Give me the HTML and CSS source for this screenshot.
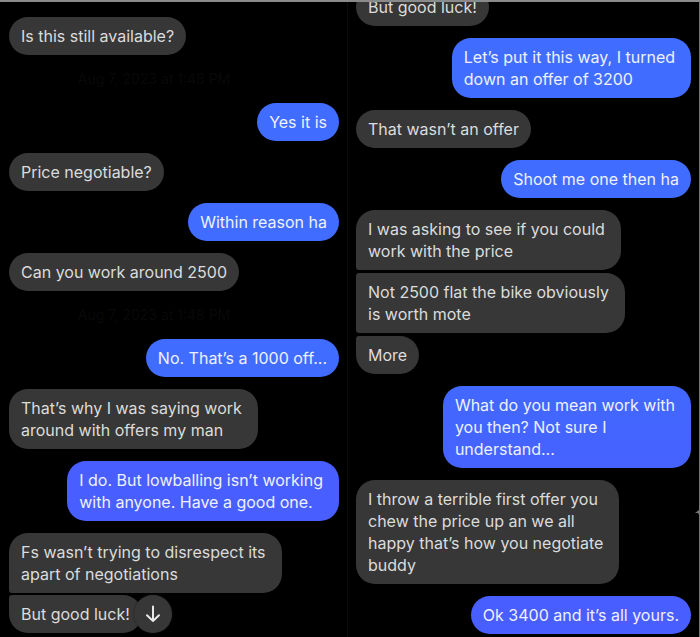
FILE: index.html
```
<!DOCTYPE html>
<html lang="en">
<head>
    <meta charset="UTF-8">
    <meta name="viewport" content="width=device-width, initial-scale=1.0">
    <title>Messages</title>
    <link rel="stylesheet" href="styles.css">
</head>
<body>
    <main class="chats">
        <section class="chat">
            <p class="msg">Is this still available?</p>
            <p class="time">Aug 7, 2023 at 1:48 PM</p>
            <p class="msg sent">Yes it is</p>
            <p class="msg">Price negotiable?</p>
            <p class="msg sent">Within reason ha</p>
            <p class="msg">Can you work around 2500</p>
            <p class="time">Aug 7, 2023 at 1:48 PM</p>
            <p class="msg sent">No. That’s a 1000 off...</p>
            <p class="msg multi">That’s why I was saying work<br>around with offers my man</p>
            <p class="msg sent multi low">I do. But lowballing isn’t working<br>with anyone. Have a good one.</p>
            <div class="group tight">
                <p class="msg multi">Fs wasn’t trying to disrespect its<br>apart of negotiations</p>
                <div class="last-row">
                    <p class="msg">But good luck!</p>
                    <button class="scroll-btn" type="button" aria-label="Scroll to bottom">
                        <svg width="20" height="20" viewBox="0 0 20 20"><path d="M10 2.5V17M4 11.2L10 17L16 11.2"/></svg>
                    </button>
                </div>
            </div>
        </section>
        <section class="chat chat-next">
            <p class="msg">But good luck!</p>
            <p class="msg sent multi">Let’s put it this way, I turned<br>down an offer of 3200</p>
            <p class="msg">That wasn’t an offer</p>
            <p class="msg sent">Shoot me one then ha</p>
            <div class="group">
                <p class="msg multi">I was asking to see if you could<br>work with the price</p>
                <p class="msg multi">Not 2500 flat the bike obviously<br>is worth mote</p>
                <p class="msg">More</p>
            </div>
            <p class="msg sent multi mid">What do you mean work with<br>you then? Not sure I<br>understand...</p>
            <p class="msg multi">I throw a terrible first offer you<br>chew the price up an we all<br>happy that’s how you negotiate<br>buddy</p>
            <p class="msg sent low">Ok 3400 and it’s all yours.</p>
        </section>
        <svg class="edge-mark" width="4" height="5" viewBox="0 0 4 5"><path d="M0 3L4 0V5L3 3Z"/></svg>
    </main>
</body>
</html>
```

FILE: styles.css
```
* { margin: 0; padding: 0; box-sizing: border-box; }
body { font-family: Inter, "Liberation Sans", sans-serif; font-size: 16px; line-height: 22px; background: #000; color: #dcdcdc; min-height: 100vh; }
.chats { position: relative; display: grid; grid-template-columns: 348fr 351fr; height: 100vh; overflow: hidden; border-top: 2px solid #8a8a8a; border-right: 1px solid #777; }
.chat { display: flex; flex-direction: column; align-items: flex-start; gap: 12px; padding: 15px 8px 0 9px; border-right: 1px solid #0b0b0b; }
.chat-next { padding: 0 8px; margin-top: -14px; border-right: none; }
.msg { background: #373737; padding: 8px 12px; border-radius: 19px; white-space: nowrap; }
.multi { padding-right: 16px; }
.sent { align-self: flex-end; background: #406dff; color: #eef1ff; }
.mid { background: linear-gradient(#4168ff, #4662ff); }
.low { background: #485eff; }
.time { align-self: center; height: 24px; padding-right: 40px; font-size: 14px; line-height: 24px; color: #080808; }
/* consecutive messages from the same person */
.group { display: flex; flex-direction: column; align-items: flex-start; gap: 3px; }
.tight { gap: 2px; }
.group > :not(:last-child) { border-bottom-left-radius: 3px; }
.group > .msg:not(:first-child), .last-row .msg { border-top-left-radius: 3px; }
.last-row { display: flex; align-items: center; }
.scroll-btn { display: flex; align-items: center; justify-content: center; width: 38px; height: 38px; margin-left: -8px; border: none; border-radius: 50%; background: #373737; box-shadow: 0 0 2px #1c1c1c; cursor: pointer; }
.scroll-btn svg { fill: none; stroke: #e8e8e8; stroke-width: 2; stroke-linecap: round; stroke-linejoin: round; }
.edge-mark { position: absolute; right: 0; top: 80%; fill: #777; }
```
